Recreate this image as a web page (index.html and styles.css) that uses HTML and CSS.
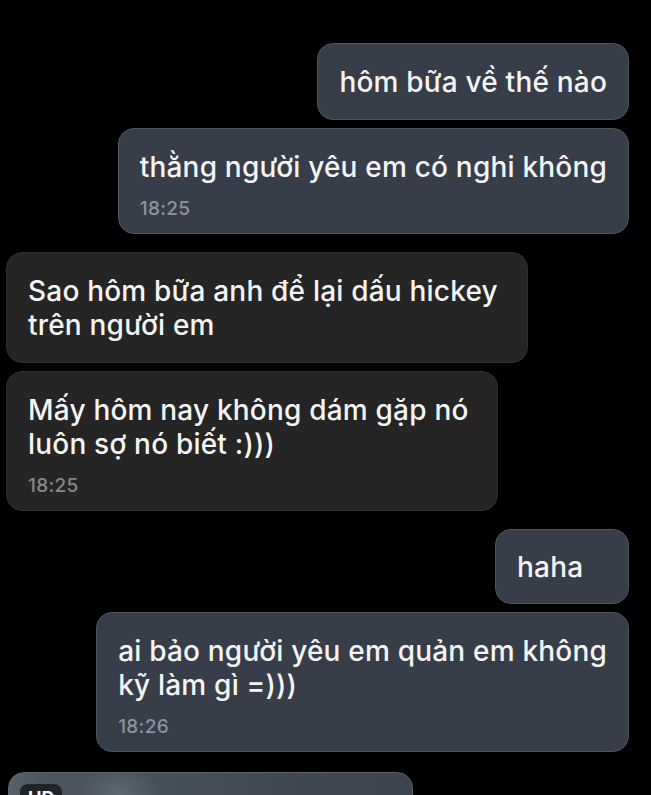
FILE: index.html
```html
<!DOCTYPE html>
<html lang="vi">
<head>
<meta charset="utf-8">
<title>Chat</title>
<link rel="stylesheet" href="styles.css">
</head>
<body>
<main class="chat">
  <section class="group out">
    <div class="bubble">hôm bữa về thế nào</div>
    <div class="bubble">thằng người yêu em có nghi không<div class="time">18:25</div></div>
  </section>
  <section class="group in">
    <div class="bubble wrap-a">Sao hôm bữa anh để lại dấu hickey<br>trên người em</div>
    <div class="bubble wrap-b">Mấy hôm nay không dám gặp nó<br>luôn sợ nó biết :)))<div class="time">18:25</div></div>
  </section>
  <section class="group out">
    <div class="bubble short">haha</div>
    <div class="bubble">ai bảo người yêu em quản em không<br>kỹ làm gì =)))<div class="time">18:26</div></div>
  </section>
  <section class="group in last">
    <div class="media"><span class="hd">HD</span></div>
  </section>
</main>
</body>
</html>
```

FILE: styles.css
```css
* { box-sizing: border-box; }
html, body {
  margin: 0;
  padding: 0;
  background: #000;
  height: 100%;
  overflow: hidden;
}
.chat {
  display: flex;
  flex-direction: column;
  gap: 18px;
  padding: 43px 22px 0 6px;
  font-family: Inter, "Liberation Sans", Arial, sans-serif;
}
.group {
  display: flex;
  flex-direction: column;
  gap: 8px;
}
.group.out { align-items: flex-end; }
.group.in { align-items: flex-start; }
.group.last { margin-top: 2px; }
.bubble {
  font-size: 28px;
  font-weight: 500;
  line-height: 34px;
  letter-spacing: 0.2px;
  color: #f4f4f4;
  padding: 21px 21px 20px 21px;
  border-radius: 16px;
  white-space: nowrap;
}
.out .bubble {
  background: #373e4a;
  border: 1px solid #4d5562;
}
.in .bubble {
  background: #252525;
  border: 1px solid #2f2f2f;
}
.bubble .time {
  font-size: 19px;
  font-weight: 500;
  line-height: 20px;
  margin-top: 15px;
  margin-bottom: -6px;
  letter-spacing: 0.3px;
}
.out .time { color: #8d939c; }
.in .time { color: #878787; }
.wrap-a { padding-right: 29px; }
.wrap-b { padding-right: 28px; }
.short { min-width: 134px; height: 75px; padding-top: 20px; }
.media {
  width: 405px;
  height: 120px;
  margin-left: 2px;
  border-radius: 16px;
  background:
    radial-gradient(ellipse 40px 30px at 110px 20px, rgba(120,130,138,0.45), transparent),
    linear-gradient(90deg, #56616a 0%, #4b545f 10%, #46505b 40%, #3f4752 70%, #3c434e 100%);
  border: 1px solid #5c6670;
  padding: 11px 0 0 11px;
}
.hd {
  display: inline-block;
  background: #1f2428;
  border-radius: 8px;
  color: #fff;
  font-weight: 700;
  font-size: 18px;
  line-height: 20px;
  padding: 4px 8px;
}
```
